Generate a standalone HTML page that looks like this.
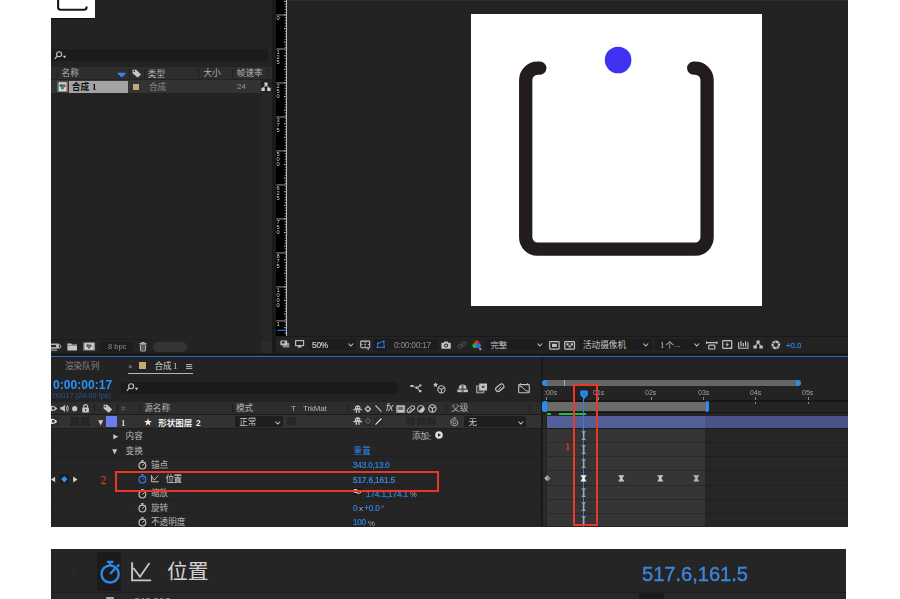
<!DOCTYPE html>
<html lang="zh-CN">
<head>
<meta charset="utf-8">
<title>After Effects - 位置 keyframes</title>
<style>
html,body{margin:0;padding:0;background:#fff;}
body{position:relative;width:900px;height:599px;overflow:hidden;font-family:"Liberation Sans",sans-serif;}
#ae,#strip{position:absolute;overflow:hidden;}
#ae div,#strip div,.t,.c,.s{position:absolute;}
.t{white-space:nowrap;display:block;will-change:transform;}
.c{display:block;white-space:nowrap;line-height:1;font-family:"Liberation Sans","Noto Sans CJK SC",sans-serif;}
.s{overflow:visible;}
</style>
</head>
<body>
<div id="ae" style="left:51px;top:0;width:797px;height:526.5px;background:#232323">
<div style="left:0px;top:0px;width:44px;height:18.1px;background:#fff;"></div>
<div style="left:0px;top:18.1px;width:44px;height:1.4px;background:#101010;"></div>
<svg class="s" style="left:0px;top:0px;" width="44" height="18" viewBox="0 0 44 18"><path d="M7.1 -2V7.2Q7.1 9.7 9.6 9.7H33.1Q35.6 9.7 35.6 7.3" fill="none" stroke="#1d1618" stroke-width="2.1" stroke-linecap="round"/></svg>
<div style="left:0px;top:48.8px;width:216.8px;height:12px;background:#1b1b1b;border-radius:0 2px 2px 0"></div>
<svg class="s" style="left:3px;top:50.5px;" width="13" height="9" viewBox="0 0 13 9"><circle cx="5.1" cy="3.2" r="2.5" fill="none" stroke="#c4c4c4" stroke-width="1.1"/><path d="M3.3 5L0.8 7.8" stroke="#c4c4c4" stroke-width="1.2" fill="none"/><path d="M8.6 4.8h3.8l-1.9 2.4z" fill="#c4c4c4"/></svg>
<div style="left:0px;top:66.8px;width:221px;height:12.2px;background:#2d2d2d;"></div>
<div style="left:5.6px;top:69px;width:1px;height:8.5px;background:#202020;"></div>
<div style="left:78.4px;top:69px;width:1px;height:8.5px;background:#202020;"></div>
<div style="left:92.8px;top:69px;width:1px;height:8.5px;background:#202020;"></div>
<div style="left:147px;top:69px;width:1px;height:8.5px;background:#202020;"></div>
<div style="left:180.6px;top:69px;width:1px;height:8.5px;background:#202020;"></div>
<div style="left:217.3px;top:69px;width:1px;height:8.5px;background:#202020;"></div>
<span class="c" style="left:10.6px;top:69.4px;width:17.2px;height:8.6px;font-size:8.6px;color:#b4b4b4;">名称</span>
<svg class="s" style="left:66.4px;top:71.6px;" width="9.4" height="5.6" viewBox="0 0 9.4 5.6"><path d="M0.3 1.3Q0.3 0.8 1 0.8H8.4Q9.1 0.8 9.1 1.3L5 5.3Q4.7 5.6 4.4 5.3Z" fill="#2d8ceb"/></svg>
<svg class="s" style="left:81px;top:68.8px;" width="9.5" height="9" viewBox="0 0 9.5 9"><path d="M0.6 0.8H4.2L9 5.4L5.6 8.6L0.6 4.2Z" fill="#c8c8c8"/><circle cx="2.3" cy="2.4" r="0.8" fill="#2d2d2d"/></svg>
<span class="c" style="left:96.8px;top:69.6px;width:17.2px;height:8.6px;font-size:8.6px;color:#b4b4b4;">类型</span>
<span class="c" style="left:152.4px;top:69.4px;width:17.2px;height:8.6px;font-size:8.6px;color:#b4b4b4;">大小</span>
<span class="c" style="left:185.8px;top:69.4px;width:25.8px;height:8.6px;font-size:8.6px;color:#b4b4b4;">帧速率</span>
<div style="left:0px;top:80.2px;width:209.5px;height:12.8px;background:#333333;"></div>
<div style="left:18px;top:81px;width:59.2px;height:12px;background:#a3a3a3;"></div>
<svg class="s" style="left:6.2px;top:80.8px;" width="11.2" height="11.6" viewBox="0 0 11.2 11.6"><rect x="0.3" y="0.6" width="10.6" height="10.4" fill="#8e8e8e"/><rect x="1.6" y="1.6" width="8" height="8.4" fill="#d8d8d8"/><rect x="0.6" y="1" width="1" height="9.6" fill="#4a4a4a" opacity=".7"/><rect x="9.6" y="1" width="1" height="9.6" fill="#4a4a4a" opacity=".7"/><circle cx="4.2" cy="4.6" r="1.7" fill="#2a50d8"/><circle cx="7" cy="4.8" r="1.7" fill="#d83030"/><circle cx="5.4" cy="7" r="1.6" fill="#20a040"/></svg>
<span class="c" style="left:20.8px;top:82.65px;width:17.4px;height:8.7px;font-size:8.7px;font-weight:bold;color:#0c0c0c;">合成</span>
<span class="t" style="left:40.8px;top:81.2px;font:bold 9px/12px 'Liberation Serif',serif;color:#0c0c0c;">1</span>
<div style="left:82px;top:84.2px;width:6.4px;height:5.8px;background:#c9a877;"></div>
<span class="c" style="left:98px;top:82.7px;width:17.2px;height:8.6px;font-size:8.6px;color:#8c8c8c;">合成</span>
<span class="t" style="left:186.2px;top:81.2px;font:normal 8px/12px 'Liberation Sans',sans-serif;color:#9a9a9a;">24</span>
<svg class="s" style="left:210.2px;top:82px;" width="10" height="9.4" viewBox="0 0 10 9.4"><path d="M3.4 0.4h3.2v3H3.4zM0.4 5.8h3.4v3.2H0.4zM6.2 5.8h3.4v3.2H6.2z" fill="#d0d0d0"/><path d="M5 3.4L2.1 5.8M5 3.4L7.9 5.8" stroke="#d0d0d0" stroke-width="1" fill="none"/></svg>
<div style="left:209.5px;top:93px;width:11.5px;height:247.3px;background:#262626;"></div>
<div style="left:0px;top:339.4px;width:101.5px;height:1.1px;background:#1b1b1b;"></div>
<div style="left:209.5px;top:341px;width:11.5px;height:12px;background:#2b2b2b;"></div>
<svg class="s" style="left:0px;top:342.6px;" width="10.5" height="8.2" viewBox="0 0 10.5 8.2"><rect x="-2" y="0.6" width="10" height="5.2" rx="1" fill="#b8b8b8"/><rect x="-1" y="2" width="6" height="2.2" fill="#2a2a2a"/><path d="M8 1.8Q10 1.8 10 3.6Q10 5.2 8 5.2" fill="none" stroke="#b8b8b8" stroke-width="1"/><path d="M0 7.2h6" stroke="#b8b8b8" stroke-width="1"/></svg>
<svg class="s" style="left:15.6px;top:342.8px;" width="10.4" height="7.8" viewBox="0 0 10.4 7.8"><path d="M0.4 0.4H4.2L5 1.4H10V7.4H0.4Z" fill="#c6c6c6"/><path d="M0.4 2.4H10" stroke="#555" stroke-width=".6"/></svg>
<svg class="s" style="left:32.2px;top:342.4px;" width="12.4" height="8.8" viewBox="0 0 12.4 8.8"><rect x="0.3" y="0.3" width="11.8" height="8.2" fill="#8e8e8e"/><rect x="1.8" y="1.2" width="8.8" height="6.4" fill="#d6d6d6"/><circle cx="4.8" cy="3.6" r="1.5" fill="#2a50d8"/><circle cx="7.4" cy="3.8" r="1.5" fill="#d83030"/><circle cx="6" cy="5.6" r="1.4" fill="#20a040"/></svg>
<div style="left:49px;top:341.6px;width:33.4px;height:10.6px;background:#1d1d1d;border-radius:1.5px"></div>
<span class="t" style="left:56.8px;top:341px;font:normal 7.5px/12px 'Liberation Sans',sans-serif;color:#8e8e8e;">8 bpc</span>
<svg class="s" style="left:88px;top:342px;" width="8" height="9.4" viewBox="0 0 8 9.4"><path d="M0.4 1.6H7.6M2.8 1.4V0.5H5.2V1.4" stroke="#b8b8b8" stroke-width="1" fill="none"/><path d="M1.2 2.8H6.8L6.3 9H1.7Z" fill="none" stroke="#b8b8b8" stroke-width="1"/><path d="M3 4v3.8M5 4v3.8" stroke="#b8b8b8" stroke-width=".8"/></svg>
<div style="left:102px;top:341.6px;width:33.8px;height:10.2px;background:#353535;border-radius:5.2px"></div>
<div style="left:221px;top:0px;width:4.2px;height:353px;background:#1a1a1a;"></div>
<div style="left:225.2px;top:0px;width:11.2px;height:336.2px;background:#000;"></div>
<div style="left:234.9px;top:0px;width:1.3px;height:336.2px;background:#bcbcbc;"></div>
<svg class="s" style="left:225.2px;top:0px;" width="11.2" height="336.2" viewBox="0 0 11.2 336.2"><path d="M0.3 14.8H9.8" stroke="#a8a8a8" stroke-width=".9"/><path d="M0.3 48.83H9.8" stroke="#a8a8a8" stroke-width=".9"/><path d="M0.3 82.86H9.8" stroke="#a8a8a8" stroke-width=".9"/><path d="M0.3 116.89H9.8" stroke="#a8a8a8" stroke-width=".9"/><path d="M0.3 150.92H9.8" stroke="#a8a8a8" stroke-width=".9"/><path d="M0.3 184.95H9.8" stroke="#a8a8a8" stroke-width=".9"/><path d="M0.3 218.98H9.8" stroke="#a8a8a8" stroke-width=".9"/><path d="M0.3 253.01H9.8" stroke="#a8a8a8" stroke-width=".9"/><path d="M0.3 287.04H9.8" stroke="#a8a8a8" stroke-width=".9"/><path d="M0.3 321.07H9.8" stroke="#a8a8a8" stroke-width=".9"/><path d="M8 1.19H9.8" stroke="#b4b4b4" stroke-width="1.1"/><path d="M8.8 3.91H9.8" stroke="#b4b4b4" stroke-width="1.1"/><path d="M8.8 6.63H9.8" stroke="#b4b4b4" stroke-width="1.1"/><path d="M8.8 9.36H9.8" stroke="#b4b4b4" stroke-width="1.1"/><path d="M8.8 12.08H9.8" stroke="#b4b4b4" stroke-width="1.1"/><path d="M8 14.8H9.8" stroke="#b4b4b4" stroke-width="1.1"/><path d="M8.8 17.52H9.8" stroke="#b4b4b4" stroke-width="1.1"/><path d="M8.8 20.24H9.8" stroke="#b4b4b4" stroke-width="1.1"/><path d="M8.8 22.97H9.8" stroke="#b4b4b4" stroke-width="1.1"/><path d="M8.8 25.69H9.8" stroke="#b4b4b4" stroke-width="1.1"/><path d="M8 28.41H9.8" stroke="#b4b4b4" stroke-width="1.1"/><path d="M8.8 31.13H9.8" stroke="#b4b4b4" stroke-width="1.1"/><path d="M8.8 33.86H9.8" stroke="#b4b4b4" stroke-width="1.1"/><path d="M8.8 36.58H9.8" stroke="#b4b4b4" stroke-width="1.1"/><path d="M8.8 39.3H9.8" stroke="#b4b4b4" stroke-width="1.1"/><path d="M8 42.02H9.8" stroke="#b4b4b4" stroke-width="1.1"/><path d="M8.8 44.75H9.8" stroke="#b4b4b4" stroke-width="1.1"/><path d="M8.8 47.47H9.8" stroke="#b4b4b4" stroke-width="1.1"/><path d="M8.8 50.19H9.8" stroke="#b4b4b4" stroke-width="1.1"/><path d="M8.8 52.91H9.8" stroke="#b4b4b4" stroke-width="1.1"/><path d="M8 55.64H9.8" stroke="#b4b4b4" stroke-width="1.1"/><path d="M8.8 58.36H9.8" stroke="#b4b4b4" stroke-width="1.1"/><path d="M8.8 61.08H9.8" stroke="#b4b4b4" stroke-width="1.1"/><path d="M8.8 63.8H9.8" stroke="#b4b4b4" stroke-width="1.1"/><path d="M8.8 66.53H9.8" stroke="#b4b4b4" stroke-width="1.1"/><path d="M8 69.25H9.8" stroke="#b4b4b4" stroke-width="1.1"/><path d="M8.8 71.97H9.8" stroke="#b4b4b4" stroke-width="1.1"/><path d="M8.8 74.69H9.8" stroke="#b4b4b4" stroke-width="1.1"/><path d="M8.8 77.42H9.8" stroke="#b4b4b4" stroke-width="1.1"/><path d="M8.8 80.14H9.8" stroke="#b4b4b4" stroke-width="1.1"/><path d="M8 82.86H9.8" stroke="#b4b4b4" stroke-width="1.1"/><path d="M8.8 85.58H9.8" stroke="#b4b4b4" stroke-width="1.1"/><path d="M8.8 88.3H9.8" stroke="#b4b4b4" stroke-width="1.1"/><path d="M8.8 91.03H9.8" stroke="#b4b4b4" stroke-width="1.1"/><path d="M8.8 93.75H9.8" stroke="#b4b4b4" stroke-width="1.1"/><path d="M8 96.47H9.8" stroke="#b4b4b4" stroke-width="1.1"/><path d="M8.8 99.19H9.8" stroke="#b4b4b4" stroke-width="1.1"/><path d="M8.8 101.92H9.8" stroke="#b4b4b4" stroke-width="1.1"/><path d="M8.8 104.64H9.8" stroke="#b4b4b4" stroke-width="1.1"/><path d="M8.8 107.36H9.8" stroke="#b4b4b4" stroke-width="1.1"/><path d="M8 110.08H9.8" stroke="#b4b4b4" stroke-width="1.1"/><path d="M8.8 112.81H9.8" stroke="#b4b4b4" stroke-width="1.1"/><path d="M8.8 115.53H9.8" stroke="#b4b4b4" stroke-width="1.1"/><path d="M8.8 118.25H9.8" stroke="#b4b4b4" stroke-width="1.1"/><path d="M8.8 120.97H9.8" stroke="#b4b4b4" stroke-width="1.1"/><path d="M8 123.7H9.8" stroke="#b4b4b4" stroke-width="1.1"/><path d="M8.8 126.42H9.8" stroke="#b4b4b4" stroke-width="1.1"/><path d="M8.8 129.14H9.8" stroke="#b4b4b4" stroke-width="1.1"/><path d="M8.8 131.86H9.8" stroke="#b4b4b4" stroke-width="1.1"/><path d="M8.8 134.59H9.8" stroke="#b4b4b4" stroke-width="1.1"/><path d="M8 137.31H9.8" stroke="#b4b4b4" stroke-width="1.1"/><path d="M8.8 140.03H9.8" stroke="#b4b4b4" stroke-width="1.1"/><path d="M8.8 142.75H9.8" stroke="#b4b4b4" stroke-width="1.1"/><path d="M8.8 145.48H9.8" stroke="#b4b4b4" stroke-width="1.1"/><path d="M8.8 148.2H9.8" stroke="#b4b4b4" stroke-width="1.1"/><path d="M8 150.92H9.8" stroke="#b4b4b4" stroke-width="1.1"/><path d="M8.8 153.64H9.8" stroke="#b4b4b4" stroke-width="1.1"/><path d="M8.8 156.36H9.8" stroke="#b4b4b4" stroke-width="1.1"/><path d="M8.8 159.09H9.8" stroke="#b4b4b4" stroke-width="1.1"/><path d="M8.8 161.81H9.8" stroke="#b4b4b4" stroke-width="1.1"/><path d="M8 164.53H9.8" stroke="#b4b4b4" stroke-width="1.1"/><path d="M8.8 167.25H9.8" stroke="#b4b4b4" stroke-width="1.1"/><path d="M8.8 169.98H9.8" stroke="#b4b4b4" stroke-width="1.1"/><path d="M8.8 172.7H9.8" stroke="#b4b4b4" stroke-width="1.1"/><path d="M8.8 175.42H9.8" stroke="#b4b4b4" stroke-width="1.1"/><path d="M8 178.14H9.8" stroke="#b4b4b4" stroke-width="1.1"/><path d="M8.8 180.87H9.8" stroke="#b4b4b4" stroke-width="1.1"/><path d="M8.8 183.59H9.8" stroke="#b4b4b4" stroke-width="1.1"/><path d="M8.8 186.31H9.8" stroke="#b4b4b4" stroke-width="1.1"/><path d="M8.8 189.03H9.8" stroke="#b4b4b4" stroke-width="1.1"/><path d="M8 191.76H9.8" stroke="#b4b4b4" stroke-width="1.1"/><path d="M8.8 194.48H9.8" stroke="#b4b4b4" stroke-width="1.1"/><path d="M8.8 197.2H9.8" stroke="#b4b4b4" stroke-width="1.1"/><path d="M8.8 199.92H9.8" stroke="#b4b4b4" stroke-width="1.1"/><path d="M8.8 202.65H9.8" stroke="#b4b4b4" stroke-width="1.1"/><path d="M8 205.37H9.8" stroke="#b4b4b4" stroke-width="1.1"/><path d="M8.8 208.09H9.8" stroke="#b4b4b4" stroke-width="1.1"/><path d="M8.8 210.81H9.8" stroke="#b4b4b4" stroke-width="1.1"/><path d="M8.8 213.54H9.8" stroke="#b4b4b4" stroke-width="1.1"/><path d="M8.8 216.26H9.8" stroke="#b4b4b4" stroke-width="1.1"/><path d="M8 218.98H9.8" stroke="#b4b4b4" stroke-width="1.1"/><path d="M8.8 221.7H9.8" stroke="#b4b4b4" stroke-width="1.1"/><path d="M8.8 224.42H9.8" stroke="#b4b4b4" stroke-width="1.1"/><path d="M8.8 227.15H9.8" stroke="#b4b4b4" stroke-width="1.1"/><path d="M8.8 229.87H9.8" stroke="#b4b4b4" stroke-width="1.1"/><path d="M8 232.59H9.8" stroke="#b4b4b4" stroke-width="1.1"/><path d="M8.8 235.31H9.8" stroke="#b4b4b4" stroke-width="1.1"/><path d="M8.8 238.04H9.8" stroke="#b4b4b4" stroke-width="1.1"/><path d="M8.8 240.76H9.8" stroke="#b4b4b4" stroke-width="1.1"/><path d="M8.8 243.48H9.8" stroke="#b4b4b4" stroke-width="1.1"/><path d="M8 246.2H9.8" stroke="#b4b4b4" stroke-width="1.1"/><path d="M8.8 248.93H9.8" stroke="#b4b4b4" stroke-width="1.1"/><path d="M8.8 251.65H9.8" stroke="#b4b4b4" stroke-width="1.1"/><path d="M8.8 254.37H9.8" stroke="#b4b4b4" stroke-width="1.1"/><path d="M8.8 257.09H9.8" stroke="#b4b4b4" stroke-width="1.1"/><path d="M8 259.82H9.8" stroke="#b4b4b4" stroke-width="1.1"/><path d="M8.8 262.54H9.8" stroke="#b4b4b4" stroke-width="1.1"/><path d="M8.8 265.26H9.8" stroke="#b4b4b4" stroke-width="1.1"/><path d="M8.8 267.98H9.8" stroke="#b4b4b4" stroke-width="1.1"/><path d="M8.8 270.71H9.8" stroke="#b4b4b4" stroke-width="1.1"/><path d="M8 273.43H9.8" stroke="#b4b4b4" stroke-width="1.1"/><path d="M8.8 276.15H9.8" stroke="#b4b4b4" stroke-width="1.1"/><path d="M8.8 278.87H9.8" stroke="#b4b4b4" stroke-width="1.1"/><path d="M8.8 281.6H9.8" stroke="#b4b4b4" stroke-width="1.1"/><path d="M8.8 284.32H9.8" stroke="#b4b4b4" stroke-width="1.1"/><path d="M8 287.04H9.8" stroke="#b4b4b4" stroke-width="1.1"/><path d="M8.8 289.76H9.8" stroke="#b4b4b4" stroke-width="1.1"/><path d="M8.8 292.48H9.8" stroke="#b4b4b4" stroke-width="1.1"/><path d="M8.8 295.21H9.8" stroke="#b4b4b4" stroke-width="1.1"/><path d="M8.8 297.93H9.8" stroke="#b4b4b4" stroke-width="1.1"/><path d="M8 300.65H9.8" stroke="#b4b4b4" stroke-width="1.1"/><path d="M8.8 303.37H9.8" stroke="#b4b4b4" stroke-width="1.1"/><path d="M8.8 306.1H9.8" stroke="#b4b4b4" stroke-width="1.1"/><path d="M8.8 308.82H9.8" stroke="#b4b4b4" stroke-width="1.1"/><path d="M8.8 311.54H9.8" stroke="#b4b4b4" stroke-width="1.1"/><path d="M8 314.26H9.8" stroke="#b4b4b4" stroke-width="1.1"/><path d="M8.8 316.99H9.8" stroke="#b4b4b4" stroke-width="1.1"/><path d="M8.8 319.71H9.8" stroke="#b4b4b4" stroke-width="1.1"/><path d="M8.8 322.43H9.8" stroke="#b4b4b4" stroke-width="1.1"/><path d="M8.8 325.15H9.8" stroke="#b4b4b4" stroke-width="1.1"/><path d="M8 327.88H9.8" stroke="#b4b4b4" stroke-width="1.1"/><path d="M8.8 330.6H9.8" stroke="#b4b4b4" stroke-width="1.1"/><path d="M8.8 333.32H9.8" stroke="#b4b4b4" stroke-width="1.1"/><path d="M1.2 330.5H10.6" stroke="#2a7ad8" stroke-width="1.2"/></svg>
<span class="t" style="left:225px;top:15.7px;width:4px;font:5.7px/5.05px 'Liberation Sans',sans-serif;color:#d8d8d8;white-space:normal;text-align:center;">0</span>
<span class="t" style="left:225px;top:49.73px;width:4px;font:5.7px/5.05px 'Liberation Sans',sans-serif;color:#d8d8d8;white-space:normal;text-align:center;">1<br>2<br>5</span>
<span class="t" style="left:225px;top:83.76px;width:4px;font:5.7px/5.05px 'Liberation Sans',sans-serif;color:#d8d8d8;white-space:normal;text-align:center;">2<br>5<br>0</span>
<span class="t" style="left:225px;top:117.79px;width:4px;font:5.7px/5.05px 'Liberation Sans',sans-serif;color:#d8d8d8;white-space:normal;text-align:center;">3<br>7<br>5</span>
<span class="t" style="left:225px;top:151.82px;width:4px;font:5.7px/5.05px 'Liberation Sans',sans-serif;color:#d8d8d8;white-space:normal;text-align:center;">5<br>0<br>0</span>
<span class="t" style="left:225px;top:185.85px;width:4px;font:5.7px/5.05px 'Liberation Sans',sans-serif;color:#d8d8d8;white-space:normal;text-align:center;">6<br>2<br>5</span>
<span class="t" style="left:225px;top:219.88px;width:4px;font:5.7px/5.05px 'Liberation Sans',sans-serif;color:#d8d8d8;white-space:normal;text-align:center;">7<br>5<br>0</span>
<span class="t" style="left:225px;top:253.91px;width:4px;font:5.7px/5.05px 'Liberation Sans',sans-serif;color:#d8d8d8;white-space:normal;text-align:center;">8<br>7<br>5</span>
<span class="t" style="left:225px;top:287.94px;width:4px;font:5.7px/5.05px 'Liberation Sans',sans-serif;color:#d8d8d8;white-space:normal;text-align:center;">1<br>0<br>0<br>0</span>
<span class="t" style="left:225px;top:321.97px;width:4px;font:5.7px/5.05px 'Liberation Sans',sans-serif;color:#d8d8d8;white-space:normal;text-align:center;">1</span>
<div style="left:236.4px;top:0px;width:560.6px;height:1.2px;background:#2c2c2c;"></div>
<div style="left:419.6px;top:14.4px;width:291.1px;height:291.3px;background:#fff;"></div>
<svg class="s" style="left:419.6px;top:14.4px;" width="291.1" height="291.3" viewBox="470.6 14.4 291.1 291.3"><path d="M539.4 68.5H537.3A12 12 0 0 0 525.3 80.5V237.6A12 12 0 0 0 537.3 249.6H694.7A12 12 0 0 0 706.7 237.6V80.5A12 12 0 0 0 694.7 68.5H693.3" fill="none" stroke="#231c1f" stroke-width="13.3" stroke-linecap="round"/><circle cx="617.7" cy="60.4" r="13.3" fill="#4032f2"/></svg>
<div style="left:225.2px;top:336.2px;width:571.8px;height:1px;background:#191919;"></div>
<div style="left:0px;top:352.8px;width:797px;height:2.8px;background:#191919;"></div>
<div style="left:0px;top:355.6px;width:797px;height:1.6px;background:#2372c9;"></div>
<div style="left:0px;top:357.2px;width:797px;height:1.2px;background:#261d18;"></div>
<svg class="s" style="left:228.6px;top:340.4px;" width="9.8" height="7.8" viewBox="0 0 9.8 7.8"><rect x="2.6" y="2.8" width="6.8" height="4.6" rx=".6" fill="#8a8a8a"/><rect x="0.4" y="0.4" width="6.8" height="4.8" rx=".6" fill="#c2c2c2"/><rect x="1.8" y="1.4" width="2.8" height="2" fill="#232323"/></svg>
<svg class="s" style="left:243.8px;top:340.4px;" width="9.2" height="8" viewBox="0 0 9.2 8"><rect x="0.6" y="0.6" width="8" height="5" fill="none" stroke="#c2c2c2" stroke-width="1.1"/><path d="M2.4 7.4H6.8L5.8 5.8H3.4Z" fill="#c2c2c2"/></svg>
<div style="left:257.6px;top:339px;width:47.2px;height:11.4px;background:#1d1d1d;border-radius:1.5px"></div>
<span class="t" style="left:261px;top:339.2px;font:normal 8.4px/12px 'Liberation Sans',sans-serif;color:#cacaca;-webkit-text-stroke:.2px #cacaca;letter-spacing:-.25px">50%</span>
<svg class="s" style="left:296.6px;top:343.2px;" width="5.6" height="3.6" viewBox="0 0 5.6 3.6"><path d="M0.4 0.5L2.8 3L5.2 0.5" fill="none" stroke="#c6c6c6" stroke-width="1.05"/></svg>
<svg class="s" style="left:308.8px;top:339.8px;" width="10.4" height="10.6" viewBox="0 0 10.4 10.6"><rect x="0.7" y="1.1" width="9" height="6.6" rx=".9" fill="none" stroke="#c2c2c2" stroke-width="1.1"/><path d="M5.2 1.2V3M5.2 5.8V7.6M0.8 4.4H2.6M7.8 4.4H9.6M4.4 4.4H6M5.2 3.7V5.1" stroke="#c2c2c2" stroke-width=".9"/><path d="M6.8 8.6h2.8l-1.4 1.7z" fill="#c2c2c2"/></svg>
<div style="left:322.8px;top:339px;width:13px;height:11.6px;background:#1b1b1b;"></div>
<svg class="s" style="left:324.6px;top:340.4px;" width="9.6" height="8.6" viewBox="0 0 9.6 8.6"><path d="M1.4 7.4L1.8 3.4L7.8 1.2L8.2 7.4Z" fill="none" stroke="#2b7de0" stroke-width="1"/><path d="M0.6 6.6h1.6v1.6H0.6zM1 2.6h1.6v1.6H1zM7 0.4h1.6V2H7zM7.4 6.6H9v1.6H7.4z" fill="#2b7de0"/></svg>
<div style="left:337.4px;top:339px;width:49.6px;height:11.4px;background:#1d1d1d;border-radius:1.5px"></div>
<span class="t" style="left:343.4px;top:339.2px;font:normal 8.4px/12px 'Liberation Sans',sans-serif;color:#8c8c8c;letter-spacing:-.26px">0:00:00:17</span>
<svg class="s" style="left:390px;top:341px;" width="10.2" height="8.2" viewBox="0 0 10.2 8.2"><path d="M0.4 1.8H2.8L3.6 0.5H6.6L7.4 1.8H9.8V7.8H0.4Z" fill="#c2c2c2"/><circle cx="5.1" cy="4.6" r="2" fill="#232323"/><circle cx="5.1" cy="4.6" r="1.1" fill="#c2c2c2"/></svg>
<svg class="s" style="left:405.8px;top:340.6px;" width="10" height="8.6" viewBox="0 0 10 8.6"><rect x="0.8" y="3.6" width="5.4" height="3.2" rx="1.6" transform="rotate(-35 3.5 5.2)" fill="none" stroke="#4a4a4a" stroke-width="1"/><rect x="3.8" y="1.6" width="5.4" height="3.2" rx="1.6" transform="rotate(-35 6.5 3.2)" fill="none" stroke="#4a4a4a" stroke-width="1"/></svg>
<svg class="s" style="left:421.2px;top:339.8px;" width="10.4" height="10.4" viewBox="0 0 10.4 10.4"><circle cx="4.8" cy="2.9" r="2.5" fill="#e8261e"/><circle cx="2.9" cy="5.8" r="2.5" fill="#1fb53c"/><circle cx="6.5" cy="5.8" r="2.5" fill="#2a6ee8"/><path d="M6.6 8.4h3.2L8.2 10.2z" fill="#e0e0e0"/></svg>
<div style="left:434px;top:339px;width:60.6px;height:11.4px;background:#1d1d1d;border-radius:1.5px"></div>
<span class="c" style="left:439.4px;top:340.6px;width:16.8px;height:8.4px;font-size:8.4px;color:#c0c0c0;">完整</span>
<svg class="s" style="left:485.8px;top:343.2px;" width="5.6" height="3.6" viewBox="0 0 5.6 3.6"><path d="M0.4 0.5L2.8 3L5.2 0.5" fill="none" stroke="#c6c6c6" stroke-width="1.05"/></svg>
<svg class="s" style="left:498px;top:340.8px;" width="10.8" height="8.8" viewBox="0 0 10.8 8.8"><rect x="0.7" y="0.7" width="9.4" height="7.4" rx=".8" fill="none" stroke="#c2c2c2" stroke-width="1.2"/><rect x="3" y="2.8" width="4.8" height="3.2" fill="#c2c2c2"/></svg>
<svg class="s" style="left:513.4px;top:340.8px;" width="11.2" height="8.8" viewBox="0 0 11.2 8.8"><rect x="0.7" y="0.7" width="9.8" height="7.4" rx=".8" fill="none" stroke="#c2c2c2" stroke-width="1.2"/><path d="M2.4 2.2h2.2v2.2H2.4zM6.8 2.2H9v2.2H6.8zM4.6 4.4h2.2v2.2H4.6z" fill="#c2c2c2"/></svg>
<div style="left:528px;top:339px;width:73px;height:11.4px;background:#1d1d1d;border-radius:1.5px"></div>
<span class="c" style="left:532px;top:340.5px;width:43px;height:8.6px;font-size:8.6px;color:#c0c0c0;">活动摄像机</span>
<svg class="s" style="left:592.4px;top:343.2px;" width="5.6" height="3.6" viewBox="0 0 5.6 3.6"><path d="M0.4 0.5L2.8 3L5.2 0.5" fill="none" stroke="#c6c6c6" stroke-width="1.05"/></svg>
<div style="left:604px;top:339px;width:48px;height:11.4px;background:#1d1d1d;border-radius:1.5px"></div>
<span class="t" style="left:608.8px;top:338.8px;font:normal 8.6px/12px 'Liberation Serif',serif;color:#c0c0c0;">1</span>
<span class="c" style="left:614.4px;top:340.6px;width:8.4px;height:8.4px;font-size:8.4px;color:#c0c0c0;">个</span>
<span class="t" style="left:623.4px;top:338.6px;font:normal 8px/12px 'Liberation Sans',sans-serif;color:#c0c0c0;">...</span>
<svg class="s" style="left:643px;top:343.2px;" width="5.6" height="3.6" viewBox="0 0 5.6 3.6"><path d="M0.4 0.5L2.8 3L5.2 0.5" fill="none" stroke="#c6c6c6" stroke-width="1.05"/></svg>
<svg class="s" style="left:655px;top:340.6px;" width="11.6" height="8.8" viewBox="0 0 11.6 8.8"><path d="M0.6 0.4V3M11 0.4V3M0.6 1.6H11" stroke="#c2c2c2" stroke-width="1.1" fill="none"/><rect x="2.8" y="4.2" width="6" height="3.8" rx=".8" fill="none" stroke="#c2c2c2" stroke-width="1.2"/></svg>
<svg class="s" style="left:671px;top:340.2px;" width="11.2" height="9.6" viewBox="0 0 11.2 9.6"><rect x="0.7" y="0.7" width="9" height="7.6" rx=".8" fill="none" stroke="#c2c2c2" stroke-width="1.2"/><path d="M5.8 1.8L3.4 4.8H5L4.2 7.2L7 4H5.2Z" fill="#c2c2c2"/><path d="M7.6 7.6h3.2L9.2 9.4z" fill="#c2c2c2"/></svg>
<svg class="s" style="left:687px;top:340.8px;" width="10.6" height="8" viewBox="0 0 10.6 8"><path d="M0.6 1.2V7.2H10V1.2" fill="none" stroke="#c2c2c2" stroke-width="1.1"/><path d="M3 0.2V5.4M5.3 2V5.4M7.6 0.2V5.4" stroke="#c2c2c2" stroke-width="1.2"/></svg>
<svg class="s" style="left:702px;top:340.4px;" width="10.2" height="9" viewBox="0 0 10.2 9"><path d="M3.5 0.4h3.2v3H3.5zM0.4 5.6h3.4v3H0.4zM6.4 5.6h3.4v3H6.4z" fill="#c2c2c2"/><path d="M5.1 3.2L2.1 5.8M5.1 3.2L8.1 5.8" stroke="#c2c2c2" stroke-width="1" fill="none"/></svg>
<div style="left:715.4px;top:339.4px;width:0.8px;height:10.8px;background:#1a1a1a;"></div>
<svg class="s" style="left:720px;top:340.2px;" width="9.6" height="9.6" viewBox="0 0 9.6 9.6"><circle cx="4.8" cy="4.8" r="4.4" fill="#c2c2c2"/><path d="M4.8 2.6L6.7 3.7V5.9L4.8 7L2.9 5.9V3.7Z" fill="#232323"/><path d="M4.8 2.6L3 0.9M6.7 3.7L8.6 2.6M6.7 5.9L8.8 6.9M4.8 7L6.4 8.9M2.9 5.9L0.9 7M2.9 3.7L0.8 2.9" stroke="#232323" stroke-width=".8"/></svg>
<span class="t" style="left:734.8px;top:340.4px;font:normal 7.7px/12px 'Liberation Sans',sans-serif;color:#2e7cd6;-webkit-text-stroke:.3px #2e7cd6">+0.0</span>
<span class="c" style="left:14px;top:361.7px;width:34.4px;height:8.6px;font-size:8.6px;color:#8a8a8a;">渲染队列</span>
<span class="t" style="left:77.4px;top:360.8px;font:normal 8px/12px 'Liberation Sans',sans-serif;color:#9a9a9a;">×</span>
<div style="left:88px;top:362.2px;width:7.2px;height:6.8px;background:#c9a877;"></div>
<span class="c" style="left:103.4px;top:361.7px;width:17.2px;height:8.6px;font-size:8.6px;color:#d0d0d0;">合成</span>
<span class="t" style="left:122.2px;top:360.4px;font:normal 8.8px/12px 'Liberation Serif',serif;color:#d0d0d0;">1</span>
<svg class="s" style="left:135.2px;top:364.4px;" width="6.2" height="5.2" viewBox="0 0 6.2 5.2"><path d="M0 0.6H6.2M0 2.6H6.2M0 4.6H6.2" stroke="#c8c8c8" stroke-width=".9"/></svg>
<div style="left:77px;top:373.1px;width:65.2px;height:1.3px;background:#b4b4b4;"></div>
<span class="t" style="left:1.6px;top:377.5px;font:bold 12.1px/14px 'Liberation Sans',sans-serif;color:#2693f6;">0:00:00:17</span>
<span class="t" style="left:2.2px;top:389.6px;font:normal 7.4px/12px 'Liberation Sans',sans-serif;color:#24579a;">00017 (24.00 fps)</span>
<div style="left:70.2px;top:381.6px;width:276.8px;height:12.8px;background:#1b1b1b;border-radius:2px"></div>
<svg class="s" style="left:74.6px;top:383.4px;" width="13" height="9" viewBox="0 0 13 9"><circle cx="5.1" cy="3.2" r="2.5" fill="none" stroke="#c4c4c4" stroke-width="1.1"/><path d="M3.3 5L0.8 7.8" stroke="#c4c4c4" stroke-width="1.2" fill="none"/><path d="M8.6 4.8h3.8l-1.9 2.4z" fill="#c4c4c4"/></svg>
<svg class="s" style="left:358.6px;top:383.6px;" width="11.8" height="8.8" viewBox="0 0 11.8 8.8"><path d="M0.4 1h3v2h-3zM5.6 2.6h2.6v2.2H5.6zM9 0.4h2.4v2.2H9zM9 6h2.4v2.2H9z" fill="#c2c2c2"/><path d="M3.4 2L5.6 3.6M8.2 3.4L9 1.8M8.2 4.2L9 6.8" stroke="#c2c2c2" stroke-width=".9" fill="none"/></svg>
<svg class="s" style="left:382px;top:382.4px;" width="12.8" height="11.6" viewBox="0 0 12.8 11.6"><path d="M2.6 0.2L3.4 1.8L5.1 2.1L3.8 3.3L4.2 5L2.6 4.2L1 5L1.4 3.3L0.1 2.1L1.8 1.8Z" fill="#c2c2c2"/><circle cx="8.4" cy="7.4" r="3.6" fill="none" stroke="#c2c2c2" stroke-width="1.1"/><path d="M8.4 7.4V11M8.4 7.4L5.3 5.6M8.4 7.4L11.5 5.6" fill="none" stroke="#c2c2c2" stroke-width="1.05"/></svg>
<svg class="s" style="left:406.4px;top:383.6px;" width="11.2" height="8.6" viewBox="0 0 11.2 8.6"><path d="M1.6 4.8Q1.6 0.4 5.6 0.4Q9.6 0.4 9.6 4.8Z" fill="#c2c2c2"/><rect x="0.3" y="5.6" width="10.6" height="2.6" fill="#c2c2c2"/><rect x="4.6" y="1" width="2" height="7" fill="#232323" opacity=".55"/></svg>
<svg class="s" style="left:425.2px;top:383px;" width="11.4" height="10.4" viewBox="0 0 11.4 10.4"><rect x="0.6" y="3" width="7.2" height="6.8" fill="#4a4a4a" stroke="#a8a8a8" stroke-width="1"/><rect x="3.2" y="0.5" width="7.8" height="7" fill="#c2c2c2"/><rect x="5.8" y="2.8" width="2.6" height="2.2" fill="#4e4e4e"/></svg>
<svg class="s" style="left:443.4px;top:383.4px;" width="11.6" height="9.6" viewBox="0 0 11.6 9.6"><rect x="1.2" y="2.4" width="9.2" height="4.8" rx="2.4" transform="rotate(-38 5.8 4.8)" fill="none" stroke="#c2c2c2" stroke-width="1.1"/><path d="M3.8 7.6L7 3.6M5.6 8.4L8.8 4.4" stroke="#c2c2c2" stroke-width=".9"/></svg>
<svg class="s" style="left:467.4px;top:382.8px;" width="12" height="10.6" viewBox="0 0 12 10.6"><rect x="0.7" y="1.6" width="10.6" height="8.2" rx=".8" fill="none" stroke="#c2c2c2" stroke-width="1.1"/><path d="M2.4 0.2V2M9.6 0.2V2" stroke="#c2c2c2" stroke-width="1.1"/><path d="M1.4 3.2C6 3.2 6 8.4 10.6 8.4" fill="none" stroke="#c2c2c2" stroke-width="1"/></svg>
<div style="left:0px;top:402.2px;width:490px;height:12.2px;background:#2d2d2d;"></div>
<div style="left:0px;top:414.4px;width:490px;height:1px;background:#1a1a1a;"></div>
<div style="left:0px;top:415.4px;width:490px;height:12.6px;background:#323232;"></div>
<div style="left:0px;top:428px;width:490px;height:0.8px;background:#1c1c1c;"></div>
<div style="left:0px;top:428.6px;width:490px;height:13.35px;background:#252525;"></div>
<div style="left:0px;top:441.95px;width:490px;height:0.9px;background:#202020;"></div>
<div style="left:0px;top:442.85px;width:490px;height:13.35px;background:#252525;"></div>
<div style="left:0px;top:456.2px;width:490px;height:0.9px;background:#202020;"></div>
<div style="left:0px;top:457.1px;width:490px;height:13.35px;background:#252525;"></div>
<div style="left:0px;top:470.45px;width:490px;height:0.9px;background:#202020;"></div>
<div style="left:0px;top:471.35px;width:490px;height:13.35px;background:#252525;"></div>
<div style="left:0px;top:484.7px;width:490px;height:0.9px;background:#202020;"></div>
<div style="left:0px;top:485.6px;width:490px;height:13.35px;background:#252525;"></div>
<div style="left:0px;top:498.95px;width:490px;height:0.9px;background:#202020;"></div>
<div style="left:0px;top:499.85px;width:490px;height:13.35px;background:#252525;"></div>
<div style="left:0px;top:513.2px;width:490px;height:0.9px;background:#202020;"></div>
<div style="left:0px;top:514.1px;width:490px;height:13.35px;background:#252525;"></div>
<div style="left:0px;top:527.45px;width:490px;height:0.9px;background:#202020;"></div>
<svg class="s" style="left:0px;top:405.3px;" width="6.2" height="6.8" viewBox="0 0 6.2 6.8"><path d="M-3.4 3.4Q1.6 -1.7 6.4 3.4Q1.6 8.5 -3.4 3.4Z" fill="#c6c6c6"/><circle cx="2.3" cy="3.4" r="1.35" fill="#2b2b2b"/></svg>
<svg class="s" style="left:8.8px;top:404.3px;" width="9.6" height="8.8" viewBox="0 0 9 8.4"><path d="M0.3 2.8H2.2L4.6 0.6V7.8L2.2 5.6H0.3Z" fill="#c6c6c6"/><path d="M5.8 2.4Q6.8 4.2 5.8 6M7 1.2Q8.8 4.2 7 7.2" fill="none" stroke="#c6c6c6" stroke-width=".9"/></svg>
<svg class="s" style="left:21.3px;top:406px;" width="5.4" height="5.4" viewBox="0 0 5.4 5.4"><circle cx="2.7" cy="2.7" r="2.6" fill="#c6c6c6"/></svg>
<svg class="s" style="left:31px;top:404.3px;" width="7.2" height="8.6" viewBox="0 0 7.2 8.6"><rect x="0.3" y="3.6" width="6.6" height="4.8" rx=".6" fill="#c6c6c6"/><path d="M1.7 3.8V2.6Q1.7 0.7 3.6 0.7Q5.5 0.7 5.5 2.6V3.8" fill="none" stroke="#c6c6c6" stroke-width="1.2"/><rect x="3.1" y="5" width="1" height="2" fill="#2b2b2b"/></svg>
<div style="left:42.6px;top:404.2px;width:1px;height:8.2px;background:#1b1b1b;"></div>
<div style="left:65.6px;top:404.2px;width:1px;height:8.2px;background:#1b1b1b;"></div>
<div style="left:87.8px;top:404.2px;width:1px;height:8.2px;background:#1b1b1b;"></div>
<div style="left:180.6px;top:404.2px;width:1px;height:8.2px;background:#1b1b1b;"></div>
<div style="left:296.4px;top:404.2px;width:1px;height:8.2px;background:#1b1b1b;"></div>
<div style="left:395.2px;top:404.2px;width:1px;height:8.2px;background:#1b1b1b;"></div>
<div style="left:478.4px;top:404.2px;width:1px;height:8.2px;background:#1b1b1b;"></div>
<svg class="s" style="left:52px;top:404.1px;" width="9.8" height="9.2" viewBox="0 0 9.8 9.2"><path d="M0.6 0.8H4.4L9.2 5.4L5.8 8.8L0.6 4.4Z" fill="#c6c6c6"/><circle cx="2.4" cy="2.5" r=".85" fill="#2d2d2d"/></svg>
<span class="t" style="left:70px;top:403.1px;font:normal 7.6px/12px 'Liberation Sans',sans-serif;color:#6a6a6a;font-style:italic">#</span>
<span class="c" style="left:93.2px;top:404.4px;width:25.8px;height:8.6px;font-size:8.6px;color:#b4b4b4;">源名称</span>
<span class="c" style="left:185px;top:404.4px;width:17.2px;height:8.6px;font-size:8.6px;color:#b4b4b4;">模式</span>
<span class="t" style="left:239.6px;top:402.7px;font:normal 8px/12px 'Liberation Sans',sans-serif;color:#b4b4b4;">T</span>
<span class="t" style="left:251.6px;top:402.7px;font:normal 8px/12px 'Liberation Sans',sans-serif;color:#b4b4b4;letter-spacing:-.15px">TrkMat</span>
<svg class="s" style="left:302.4px;top:404.7px;" width="9.4" height="8" viewBox="0 0 9.4 8"><path d="M1.9 4.2V3.2Q1.9 0.3 4.7 0.3Q7.5 0.3 7.5 3.2V4.2Z" fill="#c6c6c6"/><circle cx="3.6" cy="2.6" r=".7" fill="#2d2d2d"/><circle cx="5.8" cy="2.6" r=".7" fill="#2d2d2d"/><path d="M0.2 4.7H9.2" stroke="#c6c6c6" stroke-width="1.1"/><path d="M3.4 5.2V7.8M6 5.2V7.8" stroke="#c6c6c6" stroke-width="1.3"/></svg>
<svg class="s" style="left:313.4px;top:404.8px;" width="7.8" height="7.8" viewBox="0 0 7.8 7.8"><circle cx="3.9" cy="3.9" r="2" fill="none" stroke="#c6c6c6" stroke-width="1.1"/><path d="M3.9 0L4.7 1.7H3.1ZM3.9 7.8L4.7 6.1H3.1ZM0 3.9L1.7 3.1V4.7ZM7.8 3.9L6.1 3.1V4.7Z" fill="#c6c6c6"/></svg>
<svg class="s" style="left:324px;top:405.1px;" width="7" height="7.2" viewBox="0 0 7 7.2"><path d="M0.5 0.5L6.5 6.7" stroke="#c6c6c6" stroke-width="1.1"/></svg>
<span class="t" style="left:334.6px;top:402.4px;font:normal 10.2px/12px 'Liberation Sans',sans-serif;color:#c6c6c6;font-style:italic;letter-spacing:-.5px">fx</span>
<svg class="s" style="left:344.8px;top:404.7px;" width="9.4" height="8" viewBox="0 0 9.4 8"><rect x="0.3" y="0.3" width="8.8" height="7.4" fill="#c6c6c6"/><rect x="2.2" y="1.8" width="5" height="3.2" fill="#6a6a6a"/><path d="M1.2 0.6V7.4M8.2 0.6V7.4" stroke="#5a5a5a" stroke-width=".8" stroke-dasharray=".9 .9"/></svg>
<svg class="s" style="left:355px;top:404.5px;" width="9.8" height="8.4" viewBox="0 0 9.8 8.4"><rect x="0.6" y="2.2" width="8.6" height="4" rx="2" transform="rotate(-38 4.9 4.2)" fill="none" stroke="#c6c6c6" stroke-width="1"/><path d="M3 6.8L6 3M4.6 7.4L7.6 3.6" stroke="#c6c6c6" stroke-width=".85"/></svg>
<svg class="s" style="left:366.2px;top:404.8px;" width="7.8" height="7.8" viewBox="0 0 7.8 7.8"><circle cx="3.9" cy="3.9" r="3.4" fill="none" stroke="#c6c6c6" stroke-width="1"/><path d="M1.5 6.3A3.4 3.4 0 0 0 6.3 1.5Z" fill="#c6c6c6"/></svg>
<svg class="s" style="left:376.6px;top:404.4px;" width="8.8" height="8.8" viewBox="0 0 8.8 8.8"><circle cx="4.4" cy="4.4" r="3.7" fill="none" stroke="#c6c6c6" stroke-width="1.1"/><path d="M4.4 4.4V8M4.4 4.4L1.3 2.6M4.4 4.4L7.5 2.6" fill="none" stroke="#c6c6c6" stroke-width="1.1"/></svg>
<span class="c" style="left:400.2px;top:404.4px;width:17.2px;height:8.6px;font-size:8.6px;color:#b4b4b4;">父级</span>
<div style="left:0px;top:416.6px;width:8px;height:9px;background:#2b2b2b;"></div>
<svg class="s" style="left:0px;top:418.2px;" width="6.8" height="6.8" viewBox="0 0 6.8 6.8"><path d="M-3.4 3.4Q1.6 -1.7 6.4 3.4Q1.6 8.5 -3.4 3.4Z" fill="#e0e0e0"/><circle cx="2.3" cy="3.4" r="1.35" fill="#2b2b2b"/></svg>
<div style="left:19px;top:416.6px;width:9.2px;height:9px;background:#262626;"></div>
<div style="left:30px;top:416.6px;width:9.2px;height:9px;background:#262626;"></div>
<svg class="s" style="left:47px;top:420.1px;" width="5.4" height="5.6" viewBox="0 0 5.4 5.6"><path d="M0.2 0.3H5.2L2.7 5.4Z" fill="#d0d0d0"/></svg>
<div style="left:55.2px;top:416px;width:11px;height:10.8px;background:#677df0;"></div>
<span class="t" style="left:69.8px;top:416.5px;font:bold 9px/12px 'Liberation Serif',serif;color:#d4d4d4;">1</span>
<svg class="s" style="left:93.1px;top:418.3px;" width="8.2" height="8.2" viewBox="0 0 8.2 8.2"><path d="M4.10 0.20L5.13 2.88L8.00 3.03L5.76 4.84L6.51 7.62L4.10 6.05L1.69 7.62L2.44 4.84L0.20 3.03L3.07 2.88Z" fill="#ececec"/></svg>
<span class="c" style="left:107.2px;top:418.65px;width:34px;height:8.5px;font-size:8.5px;font-weight:bold;color:#ededed;">形状图层</span>
<span class="t" style="left:144.6px;top:416.5px;font:bold 8.6px/12px 'Liberation Sans',sans-serif;color:#ededed;">2</span>
<div style="left:184px;top:416.2px;width:47.6px;height:11px;background:#1e1e1e;border-radius:1.5px"></div>
<span class="c" style="left:188.2px;top:418px;width:17.2px;height:8.6px;font-size:8.6px;color:#c6c6c6;">正常</span>
<svg class="s" style="left:223.6px;top:420.9px;" width="5.6" height="3.6" viewBox="0 0 5.6 3.6"><path d="M0.4 0.5L2.8 3L5.2 0.5" fill="none" stroke="#c6c6c6" stroke-width="1.05"/></svg>
<div style="left:235.8px;top:416.6px;width:9.2px;height:8.8px;background:#262626;"></div>
<svg class="s" style="left:302.4px;top:417.2px;" width="9.4" height="8" viewBox="0 0 9.4 8"><path d="M1.9 4.2V3.2Q1.9 0.3 4.7 0.3Q7.5 0.3 7.5 3.2V4.2Z" fill="#d2d2d2"/><circle cx="3.6" cy="2.6" r=".7" fill="#343434"/><circle cx="5.8" cy="2.6" r=".7" fill="#343434"/><path d="M0.2 4.7H9.2" stroke="#d2d2d2" stroke-width="1.1"/><path d="M3.4 5.2V7.8M6 5.2V7.8" stroke="#d2d2d2" stroke-width="1.3"/></svg>
<div style="left:312.4px;top:416.6px;width:8.8px;height:9px;background:#2a2a2a;"></div>
<svg class="s" style="left:313.4px;top:417.3px;" width="7.8" height="7.8" viewBox="0 0 7.8 7.8"><circle cx="3.9" cy="3.9" r="2" fill="none" stroke="#585858" stroke-width="1.1"/><path d="M3.9 0L4.7 1.7H3.1ZM3.9 7.8L4.7 6.1H3.1ZM0 3.9L1.7 3.1V4.7ZM7.8 3.9L6.1 3.1V4.7Z" fill="#585858"/></svg>
<div style="left:323.1px;top:416.6px;width:9.2px;height:9px;background:#2a2a2a;"></div>
<svg class="s" style="left:324.2px;top:417.6px;" width="7" height="7.2" viewBox="0 0 7 7.2"><path d="M0.5 6.7L6.5 0.5" stroke="#e8e8e8" stroke-width="1.1"/></svg>
<div style="left:355px;top:416.6px;width:9.2px;height:8.8px;background:#282828;"></div>
<div style="left:365.6px;top:416.6px;width:9.2px;height:8.8px;background:#282828;"></div>
<div style="left:376.2px;top:416.6px;width:9.2px;height:8.8px;background:#282828;"></div>
<svg class="s" style="left:399px;top:418.1px;" width="9.7" height="8.8" viewBox="0 0 9.7 8.8"><path d="M5.42 3.99L5.54 4.08L5.65 4.21L5.74 4.37L5.79 4.56L5.80 4.76L5.76 4.98L5.68 5.19L5.54 5.39L5.35 5.57L5.13 5.70L4.86 5.80L4.58 5.83L4.27 5.81L3.97 5.72L3.68 5.57L3.42 5.35L3.21 5.07L3.04 4.74L2.95 4.38L2.93 3.99L2.99 3.59L3.13 3.21L3.36 2.84L3.66 2.53L4.03 2.27L4.46 2.09L4.93 1.99L5.41 1.99L5.91 2.09L6.38 2.30L6.81 2.60L7.18 2.99L7.48 3.45L7.67 3.98L7.76 4.55L7.74 5.14L7.59 5.72L7.32 6.28L6.95 6.78L6.47 7.20L5.90 7.52L5.27 7.73L4.60 7.81L3.91 7.76L3.24 7.56L2.61 7.23L2.04 6.77L1.57 6.20L1.22 5.54L1.00 4.80L0.94 4.03L1.03 3.25L1.27 2.48L1.68 1.77L2.22 1.15L2.88 0.64L3.65 0.26L4.48 0.04L5.36 -0.01L6.24 0.12" fill="none" stroke="#c4c4c4" stroke-width=".95" stroke-linejoin="round"/></svg>
<div style="left:413px;top:416.2px;width:62px;height:11px;background:#1e1e1e;border-radius:1.5px"></div>
<span class="c" style="left:417.4px;top:418.1px;width:8.4px;height:8.4px;font-size:8.4px;color:#c6c6c6;">无</span>
<svg class="s" style="left:466.6px;top:420.9px;" width="5.6" height="3.6" viewBox="0 0 5.6 3.6"><path d="M0.4 0.5L2.8 3L5.2 0.5" fill="none" stroke="#c6c6c6" stroke-width="1.05"/></svg>
<svg class="s" style="left:61.6px;top:434.02px;" width="5.4" height="5.4" viewBox="0 0 5.4 5.4"><path d="M0.3 0.2L5.2 2.7L0.3 5.2Z" fill="#c8c8c8"/></svg>
<span class="c" style="left:74.6px;top:432.32px;width:17.2px;height:8.6px;font-size:8.6px;color:#b8b8b8;">内容</span>
<span class="c" style="left:361px;top:432.32px;width:17.2px;height:8.6px;font-size:8.6px;color:#b8b8b8;">添加</span>
<span class="t" style="left:378.4px;top:431.02px;font:normal 8.6px/12px 'Liberation Sans',sans-serif;color:#b8b8b8;">:</span>
<svg class="s" style="left:384.3px;top:430.73px;" width="8" height="8" viewBox="0 0 8 8"><circle cx="4" cy="4" r="3.8" fill="#dedede"/><path d="M3 2.2L6 4L3 5.8Z" fill="#232323"/></svg>
<svg class="s" style="left:61.4px;top:448.68px;" width="5.4" height="5.6" viewBox="0 0 5.4 5.6"><path d="M0.2 0.3H5.2L2.7 5.4Z" fill="#c8c8c8"/></svg>
<span class="c" style="left:74.6px;top:446.57px;width:17.2px;height:8.6px;font-size:8.6px;color:#b8b8b8;">变换</span>
<span class="c" style="left:302.6px;top:446.57px;width:17.2px;height:8.6px;font-size:8.6px;color:#2e84e0;">重置</span>
<div style="left:78.6px;top:464.73px;width:1px;height:1px;background:#3a3a3a;"></div>
<svg class="s" style="left:87px;top:460.23px;" width="8.8" height="9.6" viewBox="0 0 8.8 9.6"><circle cx="4.4" cy="5.6" r="3.4" fill="none" stroke="#c4c4c4" stroke-width="1.15"/><path d="M3.2 0.6H5.6M4.4 0.6V2.2M7 2.6L7.8 1.8M4.4 5.6L6.2 3.7" stroke="#c4c4c4" stroke-width="1" fill="none"/></svg>
<span class="c" style="left:100px;top:460.82px;width:17.2px;height:8.6px;font-size:8.6px;color:#b8b8b8;">锚点</span>
<div style="left:78.6px;top:478.98px;width:1px;height:1px;background:#3a3a3a;"></div>
<svg class="s" style="left:87px;top:474.48px;" width="8.8" height="9.6" viewBox="0 0 8.8 9.6"><circle cx="4.4" cy="5.6" r="3.4" fill="none" stroke="#2b85e4" stroke-width="1.15"/><path d="M3.2 0.6H5.6M4.4 0.6V2.2M7 2.6L7.8 1.8M4.4 5.6L6.2 3.7" stroke="#2b85e4" stroke-width="1" fill="none"/></svg>
<svg class="s" style="left:99.6px;top:475.48px;" width="8" height="7.4" viewBox="0 0 8 7.4"><path d="M0.6 0.2V6.8H7.8" fill="none" stroke="#c4c4c4" stroke-width="1"/><path d="M1 1.6L3.2 5.2L7.2 0.5" fill="none" stroke="#c4c4c4" stroke-width=".9"/></svg>
<span class="c" style="left:114.6px;top:475.07px;width:16px;height:8.6px;font-size:8.6px;letter-spacing:-.6px;color:#d2d2d2;">位置</span>
<div style="left:78.6px;top:493.23px;width:1px;height:1px;background:#3a3a3a;"></div>
<svg class="s" style="left:87px;top:488.73px;" width="8.8" height="9.6" viewBox="0 0 8.8 9.6"><circle cx="4.4" cy="5.6" r="3.4" fill="none" stroke="#c4c4c4" stroke-width="1.15"/><path d="M3.2 0.6H5.6M4.4 0.6V2.2M7 2.6L7.8 1.8M4.4 5.6L6.2 3.7" stroke="#c4c4c4" stroke-width="1" fill="none"/></svg>
<span class="c" style="left:100px;top:489.32px;width:17.2px;height:8.6px;font-size:8.6px;color:#b8b8b8;">缩放</span>
<div style="left:78.6px;top:507.48px;width:1px;height:1px;background:#3a3a3a;"></div>
<svg class="s" style="left:87px;top:502.98px;" width="8.8" height="9.6" viewBox="0 0 8.8 9.6"><circle cx="4.4" cy="5.6" r="3.4" fill="none" stroke="#c4c4c4" stroke-width="1.15"/><path d="M3.2 0.6H5.6M4.4 0.6V2.2M7 2.6L7.8 1.8M4.4 5.6L6.2 3.7" stroke="#c4c4c4" stroke-width="1" fill="none"/></svg>
<span class="c" style="left:100px;top:503.57px;width:17.2px;height:8.6px;font-size:8.6px;color:#b8b8b8;">旋转</span>
<div style="left:78.6px;top:521.73px;width:1px;height:1px;background:#3a3a3a;"></div>
<svg class="s" style="left:87px;top:517.23px;" width="8.8" height="9.6" viewBox="0 0 8.8 9.6"><circle cx="4.4" cy="5.6" r="3.4" fill="none" stroke="#c4c4c4" stroke-width="1.15"/><path d="M3.2 0.6H5.6M4.4 0.6V2.2M7 2.6L7.8 1.8M4.4 5.6L6.2 3.7" stroke="#c4c4c4" stroke-width="1" fill="none"/></svg>
<span class="c" style="left:100px;top:517.83px;width:34.4px;height:8.6px;font-size:8.6px;color:#b8b8b8;">不透明度</span>
<span class="t" style="left:302.4px;top:460.43px;font:normal 8.2px/12px 'Liberation Sans',sans-serif;color:#2e84e0;-webkit-text-stroke:.22px #2e84e0;letter-spacing:-.2px">343.0,13.0</span>
<span class="t" style="left:302.4px;top:474.88px;font:normal 8.2px/12px 'Liberation Sans',sans-serif;color:#3a8ee8;-webkit-text-stroke:.22px #3a8ee8;letter-spacing:-.12px">517.6,161.5</span>
<div style="left:301.8px;top:488.23px;width:9.2px;height:6.8px;background:#1b1b1b;"></div>
<svg class="s" style="left:302.2px;top:489.43px;" width="8.2" height="4.8" viewBox="0 0 8.2 4.8"><rect x="0.5" y="0.5" width="4" height="2.8" rx="1.3" fill="none" stroke="#e4e4e4" stroke-width="1"/><rect x="3.7" y="1.5" width="4" height="2.8" rx="1.3" fill="none" stroke="#e4e4e4" stroke-width="1"/></svg>
<span class="t" style="left:314.6px;top:488.93px;font:normal 8.2px/12px 'Liberation Sans',sans-serif;color:#2e84e0;-webkit-text-stroke:.22px #2e84e0;letter-spacing:-.12px">174.1,174.1</span>
<span class="t" style="left:359px;top:489.12px;font:normal 7.6px/12px 'Liberation Sans',sans-serif;color:#a8a8a8;">%</span>
<span class="t" style="left:302.4px;top:503.07px;font:normal 8.2px/12px 'Liberation Sans',sans-serif;color:#2e84e0;-webkit-text-stroke:.22px #2e84e0;">0</span>
<span class="t" style="left:308.4px;top:503.38px;font:normal 8px/12px 'Liberation Sans',sans-serif;color:#b4b4b4;">x</span>
<span class="t" style="left:313.2px;top:503.07px;font:normal 8.2px/12px 'Liberation Sans',sans-serif;color:#2e84e0;-webkit-text-stroke:.22px #2e84e0;letter-spacing:-.1px">+0.0</span>
<span class="t" style="left:330.4px;top:502.68px;font:normal 7.6px/12px 'Liberation Sans',sans-serif;color:#a0a0a0;">°</span>
<span class="t" style="left:302.4px;top:517.33px;font:normal 8.2px/12px 'Liberation Sans',sans-serif;color:#2e84e0;-webkit-text-stroke:.22px #2e84e0;letter-spacing:-.3px">100</span>
<span class="t" style="left:317px;top:517.52px;font:normal 7.8px/12px 'Liberation Sans',sans-serif;color:#a8a8a8;">%</span>
<svg class="s" style="left:0.2px;top:475.68px;" width="4.3" height="7" viewBox="0 0 4.4 6"><path d="M4.2 0.1V5.9L0 3Z" fill="#d6d6d6"/></svg>
<div style="left:8.8px;top:473.77px;width:9px;height:10.2px;background:#1c1c1c;"></div>
<svg class="s" style="left:9.8px;top:475.68px;" width="6.6" height="6.6" viewBox="0 0 6.6 6.6"><path d="M3.3 0.1L6.5 3.3L3.3 6.5L0.1 3.3Z" fill="#2396f8"/></svg>
<svg class="s" style="left:21.9px;top:475.68px;" width="4.6" height="7" viewBox="0 0 4.6 6"><path d="M0.2 0.1V5.9L4.4 3Z" fill="#d6d6d6"/></svg>
<div style="left:490px;top:357.2px;width:2.4px;height:169.3px;background:#191919;"></div>
<div style="left:495.4px;top:380.4px;width:250px;height:5.7px;background:#666666;"></div>
<div style="left:490.8px;top:380.2px;width:4.8px;height:6px;background:#2d8ceb;border-radius:3px 0 0 3px"></div>
<div style="left:745.2px;top:380.2px;width:4.6px;height:6px;background:#2d8ceb;border-radius:0 3px 3px 0"></div>
<div style="left:513.2px;top:380.4px;width:1.2px;height:5.6px;background:#8db4e6;"></div>
<span class="t" style="left:492.6px;top:387.4px;font:normal 7px/12px 'Liberation Sans',sans-serif;color:#a2a2a2;">:00s</span>
<div style="left:495.1px;top:397.4px;width:0.9px;height:6.6px;background:#8a8a8a;"></div>
<span class="t" style="left:542.02px;top:387.4px;font:normal 7px/12px 'Liberation Sans',sans-serif;color:#a2a2a2;">01s</span>
<div style="left:547.42px;top:397.4px;width:0.9px;height:6.6px;background:#8a8a8a;"></div>
<span class="t" style="left:594.34px;top:387.4px;font:normal 7px/12px 'Liberation Sans',sans-serif;color:#a2a2a2;">02s</span>
<div style="left:599.74px;top:397.4px;width:0.9px;height:6.6px;background:#8a8a8a;"></div>
<span class="t" style="left:646.66px;top:387.4px;font:normal 7px/12px 'Liberation Sans',sans-serif;color:#a2a2a2;">03s</span>
<div style="left:652.06px;top:397.4px;width:0.9px;height:6.6px;background:#8a8a8a;"></div>
<span class="t" style="left:698.98px;top:387.4px;font:normal 7px/12px 'Liberation Sans',sans-serif;color:#a2a2a2;">04s</span>
<div style="left:704.38px;top:397.4px;width:0.9px;height:6.6px;background:#8a8a8a;"></div>
<span class="t" style="left:751.3px;top:387.4px;font:normal 7px/12px 'Liberation Sans',sans-serif;color:#a2a2a2;">05s</span>
<div style="left:756.7px;top:397.4px;width:0.9px;height:6.6px;background:#8a8a8a;"></div>
<div style="left:492.4px;top:400.4px;width:304.6px;height:1.2px;background:#171717;"></div>
<div style="left:492.4px;top:411.5px;width:304.6px;height:1.5px;background:#171717;"></div>
<div style="left:495.6px;top:401.6px;width:159.1px;height:9.9px;background:#6b6b6b;"></div>
<div style="left:491px;top:401.2px;width:4.8px;height:10.6px;background:#2d8ceb;border-radius:2.5px 0 0 2.5px"></div>
<div style="left:654.6px;top:401.2px;width:3.6px;height:10.4px;background:#2d8ceb;border-radius:0 2px 2px 0"></div>
<div style="left:495.6px;top:412.8px;width:4.2px;height:2.2px;background:#23c03e;"></div>
<div style="left:508.4px;top:412.8px;width:26.8px;height:2.2px;background:#23c03e;"></div>
<div style="left:492.4px;top:415.4px;width:3.1px;height:12.6px;background:#2a2a2a;"></div>
<div style="left:495.5px;top:415.9px;width:158.5px;height:11.7px;background:#545f9a;"></div>
<div style="left:654px;top:415.9px;width:143px;height:11.7px;background:#495387;"></div>
<div style="left:492.4px;top:428px;width:304.6px;height:0.8px;background:#1b1b1b;"></div>
<div style="left:492.4px;top:428.6px;width:3.1px;height:13.35px;background:#2a2a2a;"></div>
<div style="left:495.5px;top:428.6px;width:158.5px;height:13.35px;background:#353535;"></div>
<div style="left:654px;top:428.6px;width:143px;height:13.35px;background:#262626;"></div>
<div style="left:492.4px;top:441.95px;width:161.6px;height:0.9px;background:#292929;"></div>
<div style="left:654px;top:441.95px;width:143px;height:0.9px;background:#1f1f1f;"></div>
<div style="left:492.4px;top:442.85px;width:3.1px;height:13.35px;background:#2a2a2a;"></div>
<div style="left:495.5px;top:442.85px;width:158.5px;height:13.35px;background:#353535;"></div>
<div style="left:654px;top:442.85px;width:143px;height:13.35px;background:#262626;"></div>
<div style="left:492.4px;top:456.2px;width:161.6px;height:0.9px;background:#292929;"></div>
<div style="left:654px;top:456.2px;width:143px;height:0.9px;background:#1f1f1f;"></div>
<div style="left:492.4px;top:457.1px;width:3.1px;height:13.35px;background:#2a2a2a;"></div>
<div style="left:495.5px;top:457.1px;width:158.5px;height:13.35px;background:#353535;"></div>
<div style="left:654px;top:457.1px;width:143px;height:13.35px;background:#262626;"></div>
<div style="left:492.4px;top:470.45px;width:161.6px;height:0.9px;background:#292929;"></div>
<div style="left:654px;top:470.45px;width:143px;height:0.9px;background:#1f1f1f;"></div>
<div style="left:492.4px;top:471.35px;width:3.1px;height:13.35px;background:#2a2a2a;"></div>
<div style="left:495.5px;top:471.35px;width:158.5px;height:13.35px;background:#353535;"></div>
<div style="left:654px;top:471.35px;width:143px;height:13.35px;background:#262626;"></div>
<div style="left:492.4px;top:484.7px;width:161.6px;height:0.9px;background:#292929;"></div>
<div style="left:654px;top:484.7px;width:143px;height:0.9px;background:#1f1f1f;"></div>
<div style="left:492.4px;top:485.6px;width:3.1px;height:13.35px;background:#2a2a2a;"></div>
<div style="left:495.5px;top:485.6px;width:158.5px;height:13.35px;background:#353535;"></div>
<div style="left:654px;top:485.6px;width:143px;height:13.35px;background:#262626;"></div>
<div style="left:492.4px;top:498.95px;width:161.6px;height:0.9px;background:#292929;"></div>
<div style="left:654px;top:498.95px;width:143px;height:0.9px;background:#1f1f1f;"></div>
<div style="left:492.4px;top:499.85px;width:3.1px;height:13.35px;background:#2a2a2a;"></div>
<div style="left:495.5px;top:499.85px;width:158.5px;height:13.35px;background:#353535;"></div>
<div style="left:654px;top:499.85px;width:143px;height:13.35px;background:#262626;"></div>
<div style="left:492.4px;top:513.2px;width:161.6px;height:0.9px;background:#292929;"></div>
<div style="left:654px;top:513.2px;width:143px;height:0.9px;background:#1f1f1f;"></div>
<div style="left:492.4px;top:514.1px;width:3.1px;height:12.4px;background:#2a2a2a;"></div>
<div style="left:495.5px;top:514.1px;width:158.5px;height:12.4px;background:#353535;"></div>
<div style="left:654px;top:514.1px;width:143px;height:12.4px;background:#262626;"></div>
<div style="left:492.4px;top:526.5px;width:161.6px;height:0.9px;background:#292929;"></div>
<div style="left:654px;top:526.5px;width:143px;height:0.9px;background:#1f1f1f;"></div>
<svg class="s" style="left:528.65px;top:390.2px;" width="8.2" height="9.4" viewBox="0 0 7.8 8.6"><path d="M0.3 1.2Q0.3 0.3 1.2 0.3H6.6Q7.5 0.3 7.5 1.2V4.6L3.9 8.4L0.3 4.6Z" fill="#2d8ceb"/><path d="M2.2 2.6H5.6L3.9 5.2Z" fill="#1a4f8c" opacity=".55"/></svg>
<div style="left:532.25px;top:396px;width:1px;height:130.5px;background:#2b86e2;"></div>
<svg class="s" style="left:530.1px;top:430.78px;opacity:.82" width="5.3" height="9.3" viewBox="0 0 4.4 8"><path d="M0.1 0.2H4.3L2.9 1.7V6.3L4.3 7.8H0.1L1.5 6.3V1.7Z" fill="#b6b6b6"/></svg>
<svg class="s" style="left:530.1px;top:445.03px;opacity:.82" width="5.3" height="9.3" viewBox="0 0 4.4 8"><path d="M0.1 0.2H4.3L2.9 1.7V6.3L4.3 7.8H0.1L1.5 6.3V1.7Z" fill="#b6b6b6"/></svg>
<svg class="s" style="left:530.1px;top:459.28px;opacity:.82" width="5.3" height="9.3" viewBox="0 0 4.4 8"><path d="M0.1 0.2H4.3L2.9 1.7V6.3L4.3 7.8H0.1L1.5 6.3V1.7Z" fill="#b6b6b6"/></svg>
<svg class="s" style="left:530.1px;top:487.78px;opacity:.82" width="5.3" height="9.3" viewBox="0 0 4.4 8"><path d="M0.1 0.2H4.3L2.9 1.7V6.3L4.3 7.8H0.1L1.5 6.3V1.7Z" fill="#b6b6b6"/></svg>
<svg class="s" style="left:530.1px;top:502.03px;opacity:.82" width="5.3" height="9.3" viewBox="0 0 4.4 8"><path d="M0.1 0.2H4.3L2.9 1.7V6.3L4.3 7.8H0.1L1.5 6.3V1.7Z" fill="#b6b6b6"/></svg>
<svg class="s" style="left:530.1px;top:516.27px;opacity:.82" width="5.3" height="9.3" viewBox="0 0 4.4 8"><path d="M0.1 0.2H4.3L2.9 1.7V6.3L4.3 7.8H0.1L1.5 6.3V1.7Z" fill="#b6b6b6"/></svg>
<svg class="s" style="left:492.9px;top:474.82px;" width="6.6" height="6.6" viewBox="0 0 5.8 5.8"><path d="M2.9 0.2L5.6 2.9L2.9 5.6L0.2 2.9Z" fill="#b4b4b4"/><path d="M2.9 0.2L5.6 2.9L2.9 5.6Z" fill="#8a8a8a"/></svg>
<svg class="s" style="left:529.25px;top:474.82px;" width="7" height="6.6" viewBox="0 0 6.6 6.6"><path d="M0.2 0.2H6.4L4.3 3.3L6.4 6.4H0.2L2.3 3.3Z" fill="#f2f2f2"/></svg>
<svg class="s" style="left:566.5px;top:474.82px;" width="6.6" height="6.6" viewBox="0 0 6.6 6.6"><path d="M0.2 0.2H6.4L4.3 3.3L6.4 6.4H0.2L2.3 3.3Z" fill="#c8c8c8"/></svg>
<svg class="s" style="left:605.7px;top:474.82px;" width="6.6" height="6.6" viewBox="0 0 6.6 6.6"><path d="M0.2 0.2H6.4L4.3 3.3L6.4 6.4H0.2L2.3 3.3Z" fill="#c8c8c8"/></svg>
<svg class="s" style="left:642.3px;top:474.82px;" width="6.6" height="6.6" viewBox="0 0 6.6 6.6"><path d="M0.2 0.2H6.4L4.3 3.3L6.4 6.4H0.2L2.3 3.3Z" fill="#b4b4b4"/></svg>
<div style="left:63.6px;top:471.2px;width:324.4px;height:20.5px;background:transparent;border:2px solid #e9372a;box-sizing:border-box"></div>
<div style="left:522.4px;top:383.9px;width:24.2px;height:141.8px;background:transparent;border:2px solid #e9372a;box-sizing:border-box"></div>
<span class="t" style="left:50px;top:474.2px;font:normal 12px/12px 'Liberation Serif',serif;color:#e9372a;-webkit-text-stroke:.25px #e9372a;transform:scaleX(.86);transform-origin:0 50%">2</span>
<span class="t" style="left:514.2px;top:440.4px;font:normal 11px/12px 'Liberation Serif',serif;color:#e9372a;-webkit-text-stroke:.25px #e9372a">1</span>
</div>
<div id="strip" style="left:51px;top:549px;width:795px;height:50px;background:#252525">
<div style="left:45.5px;top:2.5px;width:24.1px;height:39.9px;background:#1b1b1b;"></div>
<div style="left:0px;top:42.6px;width:795px;height:1.2px;background:#1c1c1c;"></div>
<div style="left:0px;top:43.8px;width:795px;height:6.2px;background:#272727;"></div>
<div style="left:21.6px;top:23.4px;width:1.8px;height:1.8px;background:#3a3a3a;"></div>
<svg class="s" style="left:47.6px;top:10px;" width="22.4" height="25.4" viewBox="0 0 22.4 25.4"><circle cx="11.1" cy="15" r="8.6" fill="none" stroke="#2b88e8" stroke-width="2.5"/><path d="M8 2.8H14.4M11.1 2.8V6.2M18.2 7.6L20.2 5.6M11.1 15L16 9.6" stroke="#2b88e8" stroke-width="2.3" fill="none"/></svg>
<svg class="s" style="left:79.8px;top:13.4px;" width="20.4" height="19.6" viewBox="0 0 20.4 19.6"><path d="M1.1 0.2V18.4H20.2" fill="none" stroke="#c6c6c6" stroke-width="1.9"/><path d="M2.4 6L9 14.8L18.5 1.1" fill="none" stroke="#c6c6c6" stroke-width="1.8"/></svg>
<span class="c" style="left:116px;top:12.6px;width:41.6px;height:20.8px;font-size:20.8px;color:#d2d2d2;">位置</span>
<span class="t" style="left:590.6px;top:12.6px;font:normal 20.1px/24px 'Liberation Sans',sans-serif;color:#3b86dc;-webkit-text-stroke:.4px #3b86dc;letter-spacing:-.02px">517.6,161.5</span>
<div style="left:54.6px;top:48px;width:8.4px;height:2px;background:#a8a8a8;border-radius:1px 1px 0 0"></div>
<div style="left:84px;top:49px;width:4px;height:1px;background:#7e7e7e;"></div>
<div style="left:90.5px;top:49px;width:2.5px;height:1px;background:#7e7e7e;"></div>
<div style="left:95px;top:49px;width:4px;height:1px;background:#7e7e7e;"></div>
<div style="left:103px;top:49px;width:4px;height:1px;background:#7e7e7e;"></div>
<div style="left:109px;top:49px;width:3px;height:1px;background:#7e7e7e;"></div>
<div style="left:114.5px;top:49px;width:4.5px;height:1px;background:#7e7e7e;"></div>
<div style="left:587.6px;top:44.4px;width:25.4px;height:5.6px;background:#1a1a1a;border-radius:2px"></div>
</div>
</body>
</html>
